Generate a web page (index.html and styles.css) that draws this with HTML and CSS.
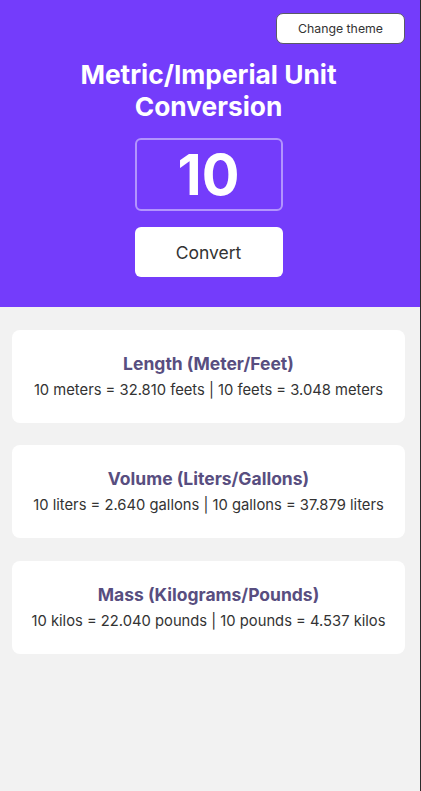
FILE: index.html
```html
<!DOCTYPE html>
<html lang="en">
<head>
<meta charset="utf-8">
<title>Metric/Imperial Unit Conversion</title>
<link rel="stylesheet" href="styles.css">
</head>
<body>
<div class="page">
  <header class="hero">
    <div class="topbar">
      <button class="theme-btn">Change theme</button>
    </div>
    <h1 class="title">Metric/Imperial Unit<br>Conversion</h1>
    <div class="input-box">10</div>
    <button class="convert-btn">Convert</button>
  </header>
  <main class="results">
    <section class="card">
      <h2 class="card-title">Length (Meter/Feet)</h2>
      <p class="card-text">10 meters = 32.810 feets | 10 feets = 3.048 meters</p>
    </section>
    <section class="card">
      <h2 class="card-title">Volume (Liters/Gallons)</h2>
      <p class="card-text">10 liters = 2.640 gallons | 10 gallons = 37.879 liters</p>
    </section>
    <section class="card card-last">
      <h2 class="card-title">Mass (Kilograms/Pounds)</h2>
      <p class="card-text">10 kilos = 22.040 pounds | 10 pounds = 4.537 kilos</p>
    </section>
  </main>
</div>
</body>
</html>
```
FILE: styles.css
```css
* { box-sizing: border-box; }
html, body { margin: 0; padding: 0; height: 100%; }
body {
  font-family: Inter, "Noto Sans", sans-serif;
  background: #f2f2f2;
}
.page {
  min-height: 100%;
  width: 421px;
  border-right: 1px solid #2b2b2b;
  background: #f2f2f2;
}
.hero {
  background: #743cfb;
  height: 307px;
  padding: 13px 15px 0 12px;
  display: flex;
  flex-direction: column;
  align-items: center;
}
.topbar {
  align-self: stretch;
  display: flex;
  justify-content: flex-end;
}
.theme-btn {
  width: 129px;
  height: 31px;
  background: #fff;
  border: 1px solid #5a5a66;
  border-radius: 7px;
  font-family: Inter, sans-serif;
  font-size: 12.3px;
  color: #333;
  padding: 0;
}
.title {
  margin: 15px 0 0;
  color: #fff;
  font-size: 26.3px;
  line-height: 32px;
  font-weight: 700;
  text-align: center;
}
.input-box {
  margin-top: 15px;
  width: 148px;
  height: 73px;
  border: 2px solid rgba(255, 255, 255, 0.45);
  border-radius: 6px;
  color: #fff;
  font-size: 56px;
  font-weight: 700;
  display: flex;
  align-items: center;
  justify-content: center;
}
.convert-btn {
  margin-top: 16px;
  width: 148px;
  height: 50px;
  background: #fff;
  border: none;
  border-radius: 6px;
  font-family: Inter, sans-serif;
  font-size: 17.5px;
  color: #333;
  padding: 0;
}
.results {
  padding: 23px 15px 0 12px;
  display: flex;
  flex-direction: column;
  gap: 22px;
}
.card {
  background: #fff;
  border-radius: 8px;
  padding: 24px 8px 23px;
  text-align: center;
}
.card-last {
  margin-top: 1px;
}
.card-title {
  margin: 0;
  font-size: 17.5px;
  line-height: 20px;
  font-weight: 700;
  color: #584e80;
}
.card-text {
  margin: 6px 0 0;
  font-size: 14.75px;
  line-height: 20px;
  color: #333;
}
```
